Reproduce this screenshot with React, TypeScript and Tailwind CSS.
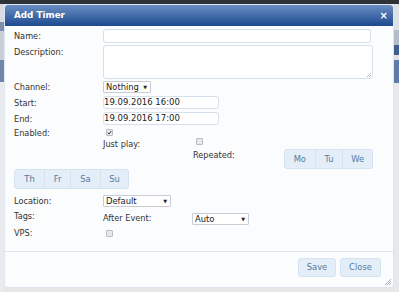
import React from 'react';

const label = 'text-[8.2px] leading-[10px] text-[#333]';

function Select({ text, width }: { text: string; width: string }) {
  return (
    <div
      className={`${width} h-[12px] flex items-center justify-between border border-[#c9cdd2] bg-white rounded-[1px] pl-[2px] pr-[3px] text-[8.4px] leading-[10px] text-[#222]`}
    >
      <span>{text}</span>
      <span className="text-[5px] leading-[5px] text-[#222]">▼</span>
    </div>
  );
}

function Box({ checked }: { checked?: boolean }) {
  return (
    <div className="w-[7px] h-[7px] border border-[#b9bec5] bg-[#e6e8eb] rounded-[1px] flex items-center justify-center">
      {checked && (
        <svg width="5" height="5" viewBox="0 0 10 10">
          <path d="M1.5 5.5 L4 8 L8.5 2" stroke="#333" strokeWidth="2" fill="none" />
        </svg>
      )}
    </div>
  );
}

function DayGroup({ days, widths }: { days: string[]; widths: string[] }) {
  return (
    <div className="flex h-[20px] border border-[#d5e2ef] rounded-[3px] bg-[#e4eef9] overflow-hidden">
      {days.map((d, i) => (
        <div
          key={d}
          className={`${widths[i]} flex items-center justify-center text-[8.4px] text-[#567a9f] ${i > 0 ? 'border-l border-[#d5e2ef]' : ''}`}
        >
          {d}
        </div>
      ))}
    </div>
  );
}

function Background() {
  return (
    <div className="flex flex-col w-full h-full">
      <div className="h-[4px] bg-[#2e3237]" />
      <div className="flex flex-1">
        <div className="w-[4px] flex flex-col">
          <div className="h-[18px] bg-[#d9dde3]" />
          <div className="h-[9px] bg-[#7b8fab]" />
          <div className="h-[29px] bg-[#c9ced6]" />
          <div className="h-[22px] bg-[#6f87aa]" />
          <div className="flex-1 bg-[#e9ebee]" />
        </div>
        <div className="flex-1 bg-[#e6e7e9]" />
        <div className="w-[5px] flex flex-col">
          <div className="h-[26px] bg-[#dde0e4]" />
          <div className="h-[15px] bg-[#b3bcc8]" />
          <div className="h-[10px] bg-[#3f5f8f]" />
          <div className="h-[5px] bg-[#dfe2e6]" />
          <div className="h-[23px] bg-[#5f7cab]" />
          <div className="flex-1 bg-[#e6e8eb]" />
        </div>
      </div>
    </div>
  );
}

export default function App() {
  return (
    <div className="relative w-[399px] h-[292px] overflow-hidden font-['DejaVu_Sans',sans-serif]">
      <Background />
      <div className="absolute left-[4px] top-[4px] w-[390px] h-[284px] bg-[#fbfcfd] border border-[#dde5ee] rounded-[3px] flex flex-col">
        <div className="h-[21px] rounded-t-[3px] bg-gradient-to-b from-[#6a8ec2] to-[#1c4a8f] flex items-center justify-between pl-[9px] pr-[5px]">
          <span className="text-white font-bold text-[8.8px]">Add Timer</span>
          <span className="text-white font-bold text-[10px] leading-[10px]">×</span>
        </div>

        <div className="flex flex-col pl-[9px] pr-[20px]">
          {/* Name */}
          <div className="flex items-center mt-[3px] h-[14px]">
            <div className={`${label} w-[89px]`}>Name:</div>
            <input
              readOnly
              className="w-[268px] h-[14px] border border-[#d6e0ea] rounded-[3px] bg-white outline-none"
            />
          </div>
          {/* Description */}
          <div className="flex items-start mt-[2px] h-[34px]">
            <div className={`${label} w-[89px] mt-[2px]`}>Description:</div>
            <div className="w-[271px] h-[34px] border border-[#d6e0ea] rounded-[3px] bg-white relative">
              <svg className="absolute right-[1px] bottom-[1px]" width="4" height="4" viewBox="0 0 4 4">
                <path d="M4 0 L0 4 M4 2 L2 4" stroke="#999" strokeWidth="0.7" />
              </svg>
            </div>
          </div>
          {/* Channel */}
          <div className="flex items-center mt-[2px] h-[12px]">
            <div className={`${label} w-[89px]`}>Channel:</div>
            <Select text="Nothing" width="w-[48px]" />
          </div>
          {/* Start */}
          <div className="flex items-center mt-[3px] h-[13px]">
            <div className={`${label} w-[89px]`}>Start:</div>
            <div className="w-[116px] h-[13px] border border-[#d6e0ea] rounded-[3px] bg-white flex items-center text-[8.5px] text-[#222]">
              19.09.2016 16:00
            </div>
          </div>
          {/* End */}
          <div className="flex items-center mt-[3px] h-[13px]">
            <div className={`${label} w-[89px]`}>End:</div>
            <div className="w-[116px] h-[13px] border border-[#d6e0ea] rounded-[3px] bg-white flex items-center text-[8.5px] text-[#222]">
              19.09.2016 17:00
            </div>
          </div>
          {/* Enabled */}
          <div className="flex items-start mt-[3px] h-[10px]">
            <div className={`${label} w-[92px]`}>Enabled:</div>
            <div className="mt-[1px]">
              <Box checked />
            </div>
          </div>
          {/* Just play */}
          <div className="flex items-start h-[11px] pl-[89px]">
            <div className={`${label} w-[93px] mt-[1px]`}>Just play:</div>
            <Box />
          </div>
          {/* Repeated */}
          <div className="flex items-start h-[20px] pl-[179px]">
            <div className={`${label} w-[92px] mt-[1px]`}>Repeated:</div>
            <DayGroup days={['Mo', 'Tu', 'We']} widths={['w-[30px]', 'w-[28px]', 'w-[30px]']} />
          </div>
          {/* Th - Su */}
          <div className="flex h-[20px]">
            <DayGroup
              days={['Th', 'Fr', 'Sa', 'Su']}
              widths={['w-[29px]', 'w-[26px]', 'w-[30px]', 'w-[28px]']}
            />
          </div>
          {/* Location */}
          <div className="flex items-center mt-[6px] h-[12px]">
            <div className={`${label} w-[89px]`}>Location:</div>
            <Select text="Default" width="w-[68px]" />
          </div>
          {/* Tags / After Event */}
          <div className="flex items-start mt-[4px] h-[14px]">
            <div className={`${label} w-[89px]`}>Tags:</div>
            <div className={`${label} w-[89px] mt-[2px]`}>After Event:</div>
            <div className="mt-[2px]">
              <Select text="Auto" width="w-[57px]" />
            </div>
          </div>
          {/* VPS */}
          <div className="flex items-start mt-[3px] h-[10px]">
            <div className={`${label} w-[92px]`}>VPS:</div>
            <div className="mt-[2px]">
              <Box />
            </div>
          </div>
        </div>

        <div className="mt-[13px] h-[1px] bg-[#dde7f1]" />

        <div className="flex justify-end gap-[4px] mt-[6px] pr-[12px]">
          <div className="w-[38px] h-[19px] flex items-center justify-center border border-[#d5e2ef] rounded-[3px] bg-[#e4eef9] text-[8.4px] text-[#567a9f]">
            Save
          </div>
          <div className="w-[41px] h-[19px] flex items-center justify-center border border-[#d5e2ef] rounded-[3px] bg-[#e4eef9] text-[8.4px] text-[#567a9f]">
            Close
          </div>
        </div>

        <svg className="absolute right-[2px] bottom-[2px]" width="6" height="6" viewBox="0 0 6 6">
          <path d="M6 0 L0 6 M6 2 L2 6 M6 4 L4 6" stroke="#8fa3bd" strokeWidth="0.8" />
        </svg>
      </div>
    </div>
  );
}
